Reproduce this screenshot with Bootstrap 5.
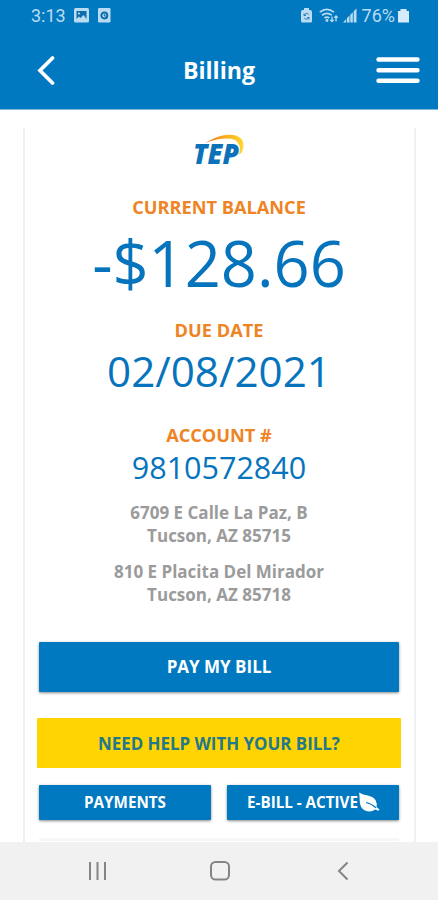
<!DOCTYPE html>
<html lang="en">
<head>
<meta charset="utf-8">
<meta name="viewport" content="width=device-width, initial-scale=1">
<title>Billing</title>
<link href="https://cdn.jsdelivr.net/npm/bootstrap@5.3.0/dist/css/bootstrap.min.css" rel="stylesheet">
<style>
body{font-family:"Open Sans","Noto Sans",sans-serif;height:900px;overflow:hidden;color:#0674bc}
.app-head{background:#0079c1;height:110px;border-bottom:1px solid #7fb9de}
.status{height:31px;padding:0 29px 0 31px;font:400 18px/31px Roboto,sans-serif;color:#b9dcf2}
.title-bar{height:78px;padding:0 18px 0 37px}
.title-bar h1{font-size:23.2px;font-weight:700;line-height:30px;margin:0 0 0 6px}
.app-main{padding:18px 22px 0 23px}
.bill-card{border:solid #f0f0f0;border-width:0 2px;border-radius:0;padding:0 15px 0 14px;--bs-card-bg:#fff}
.logo-row{height:67px;padding:5px 0 0 153px}
.logo-row svg{overflow:visible}
.lbl{font-size:18.2px;font-weight:700;line-height:24px;color:#ee8424}
.amount{font-size:63.2px;line-height:86px;padding-top:1px}
.due-lbl{margin-top:12px}
.due{font-size:42.2px;line-height:58px;margin-bottom:23px}
.acct{font-size:30.5px;line-height:40px;margin-bottom:14px}
.addr{font-size:17px;font-weight:700;line-height:23.3px;color:#9b9b9b;margin-bottom:12px}
.act{--bs-btn-bg:#0079c1;--bs-btn-color:#fff;--bs-btn-border-width:0;--bs-btn-border-radius:1px;--bs-btn-font-weight:700;padding:0;height:50px;font-size:17px;box-shadow:0 1px 3px #0007}
.pay{margin-top:35.600px}
.act-help{background:#ffd400;color:#22788c;font-size:16.9px;margin:26px -2px 17px;padding-top:1px;box-shadow:none}
.act-sm{height:35px;font-size:15.2px}
.act-sm svg{margin-right:-1px}
.sep{height:3px;background:#f7f7f7;margin-top:18px}
.sys-nav{height:58px;background:#f1f1f1;padding:0 89px 0 88px}
.home{margin-left:-6px}
svg{display:block;flex:none}
</style>
</head>
<body class="d-flex flex-column">
<header class="app-head flex-shrink-0">
  <div class="status d-flex align-items-center justify-content-between">
    <div class="d-flex align-items-center">
      <span>3:13</span>
      <svg class="ms-2" width="15" height="15" viewBox="0 0 15 15"><rect width="15" height="14.5" rx="1.5" fill="#b9dcf2"/><path d="M2.500 3h10v8l-3-4-3 3-1.500-1.500-2.500 2.500z" fill="#0e6cab"/><circle cx="5" cy="5.500" r="1.100" fill="#b9dcf2"/></svg>
      <svg style="margin-left:9px" width="13" height="15" viewBox="0 0 13 15"><rect width="12.500" height="14.500" rx="1.200" fill="#b9dcf2"/><circle cx="6.300" cy="7.500" r="3" fill="none" stroke="#0e6cab" stroke-width="1.900"/><path d="M6.300 6v2h2" stroke="#0e6cab" fill="none"/></svg>
    </div>
    <div class="d-flex align-items-center">
      <svg width="11" height="15" viewBox="0 0 11 15"><path d="M3 0h5v2h1.500Q11 2.500 11 4v9q0 1.500-1.500 1.500h-8Q0 14.500 0 13V4Q0 2.500 1.500 2H3z" fill="#b9dcf2"/><path d="M3.300 7.500a2.500 2.500 0 014.500-1M7.700 9.500a2.500 2.500 0 01-4.500.5M3 5.500v2h2M8 11.500v-2H6" stroke="#0e6cab" stroke-width=".8" fill="none"/></svg>
      <svg style="margin-left:7px" width="20" height="15" viewBox="0 0 20 15"><path d="M.8 4.200q7-5.600 14.200 0M3 7.200q5-3.800 9.800 0M5.500 10q2.400-1.900 4.800 0" fill="none" stroke="#b9dcf2" stroke-width="1.700"/><circle cx="8" cy="12.500" r="1.400" fill="#b9dcf2"/><path d="M13 8.500v5M11.300 11.800l1.700 1.700 1.700-1.700M17 13.500V8M15.300 9.700L17 8l1.700 1.700" fill="none" stroke="#b9dcf2" stroke-width="1.300"/></svg>
      <svg class="ms-1" width="14" height="15" viewBox="0 0 14 15"><path d="M0 14.500L3.200 11v3.500zM4 14.500V10l2.500-2.500v7zM7.300 14.500V6.700l2.500-2.500v10.300zM10.700 14.500V3.200L13.500.5v14z" fill="#b9dcf2"/></svg>
      <span style="margin-left:5px">76%</span>
      <svg style="margin-left:3px" width="11" height="15" viewBox="0 0 11 15"><path d="M2.500 1h6v2H11v11.500H0V3h2.500z" fill="#d5eafa"/></svg>
    </div>
  </div>
  <nav class="title-bar d-flex align-items-center justify-content-between">
    <svg width="19" height="30" viewBox="0 0 19 30"><path d="M15.500 3L3 15.500 15.500 28" fill="none" stroke="#fff" stroke-width="3.700" stroke-linecap="round"/></svg>
    <h1 class="text-white">Billing</h1>
    <svg width="44" height="28" viewBox="0 0 44 28"><path d="M2.500 3.500h39M2.500 14.200h39M2.500 24.800h39" stroke="#fff" stroke-width="4.400" stroke-linecap="round"/></svg>
  </nav>
</header>
<main class="app-main flex-grow-1 overflow-hidden">
  <section class="card bill-card text-center">
    <div class="logo-row">
      <svg width="54" height="36" viewBox="0 0 54 36">
        <defs><linearGradient id="arc"><stop stop-color="#ed6f2d"/><stop offset=".45" stop-color="#f8a51b"/><stop offset="1" stop-color="#ffd632"/></linearGradient></defs>
        <path d="M13 10Q29 0 42 2Q55 5 50 19L47 22Q50 11 43 7Q33 3 13 10Z" fill="url(#arc)"/>
        <text x="1" y="31" font-family="Open Sans,sans-serif" font-size="28" font-weight="800" font-style="italic" fill="#0b72b9" textLength="46" lengthAdjust="spacingAndGlyphs">TEP</text>
      </svg>
    </div>
    <div class="lbl">CURRENT BALANCE</div>
    <div class="amount">-$128.66</div>
    <div class="lbl due-lbl">DUE DATE</div>
    <div class="due">02/08/2021</div>
    <div class="lbl">ACCOUNT #</div>
    <div class="acct">9810572840</div>
    <address class="addr">6709 E Calle La Paz, B<br>Tucson, AZ 85715</address>
    <address class="addr mb-0">810 E Placita Del Mirador<br>Tucson, AZ 85718</address>
    <button class="btn act pay">PAY MY BILL</button>
    <button class="btn act act-help">NEED HELP WITH YOUR BILL?</button>
    <div class="d-flex" style="gap:16px">
      <button class="btn act act-sm flex-fill w-50">PAYMENTS</button>
      <button class="btn act act-sm flex-fill w-50 d-flex align-items-center justify-content-center">E-BILL - ACTIVE
        <svg width="22" height="21" viewBox="0 0 22 21"><path d="M1 .5C6 4 14 2.500 17.500 8Q19.500 12 18.500 15L21.500 17.500 20.500 18.800 17 17.500Q13 21 7 18.500C0 15 2.500 7 1 .5Z" fill="#fff"/><path d="M8 10.500Q13.500 11.500 18 15.800" fill="none" stroke="#0079c1" stroke-width="1.200"/></svg>
      </button>
    </div>
    <div class="sep"></div>
    <div style="height:30px"></div>
  </section>
</main>
<footer class="sys-nav flex-shrink-0 d-flex align-items-center justify-content-between">
  <svg width="20" height="20" viewBox="0 0 20 20"><path d="M2 1v18M9.500 1v18M17 1v18" stroke="#858585" stroke-width="2"/></svg>
  <svg class="home" width="20" height="20" viewBox="0 0 20 20"><rect x="1" y="1" width="18" height="17.500" rx="4.500" fill="none" stroke="#858585" stroke-width="2"/></svg>
  <svg width="12" height="20" viewBox="0 0 12 20"><path d="M10.500 1.500L2 10l8.500 8.500" fill="none" stroke="#858585" stroke-width="2"/></svg>
</footer>
<script src="https://cdn.jsdelivr.net/npm/bootstrap@5.3.0/dist/js/bootstrap.bundle.min.js"></script>
</body>
</html>
